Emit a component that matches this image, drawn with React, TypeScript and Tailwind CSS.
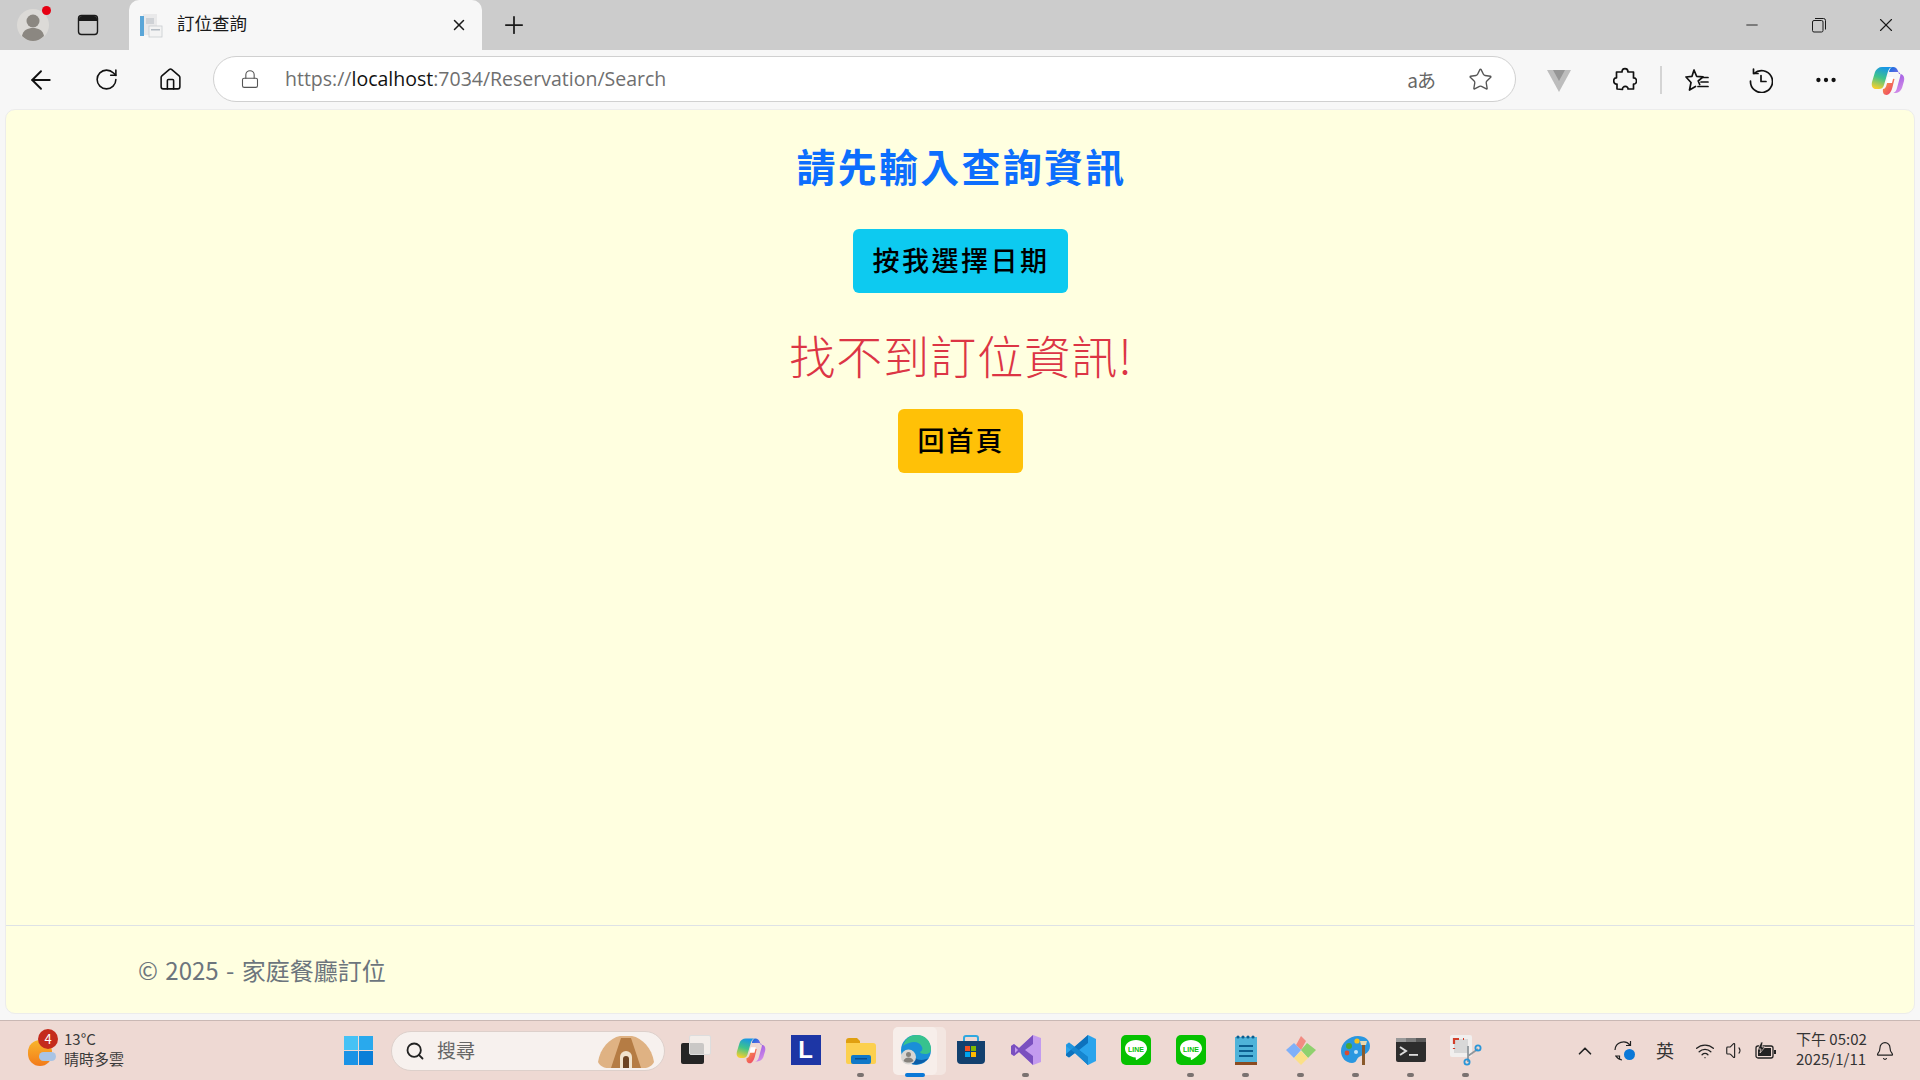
import { ArrowLeft, RotateCw, Home, Lock, Star, X, Plus, Minus, MoreHorizontal, ChevronUp, Bell, Search, Wifi, Volume1 } from 'lucide-react'

const CJK = "font-['Noto_Sans_CJK_TC','Noto_Sans',sans-serif]"

function ProfileAvatar() {
  return (
    <div className="relative w-[32px] h-[32px]">
      <svg width="32" height="32" viewBox="0 0 32 32">
        <circle cx="16" cy="16" r="16" fill="#dcdad7" />
        <circle cx="16" cy="12" r="6.5" fill="#8b8781" />
        <path d="M5 27c1-6 6-8 11-8s10 2 11 8c-3 3-7 5-11 5s-8-2-11-5z" fill="#8b8781" />
      </svg>
      <div className="absolute right-[-2px] top-[-3px] w-[9px] h-[9px] rounded-full bg-[#e60012]" />
    </div>
  )
}

function TabsIcon() {
  return (
    <svg width="22" height="22" viewBox="0 0 22 22" fill="none">
      <rect x="1.5" y="1.5" width="19" height="19" rx="3" stroke="#1a1a1a" strokeWidth="1.4" />
      <path d="M2 5a3 3 0 0 1 3-3h12a3 3 0 0 1 3 3v2H2z" fill="#1a1a1a" />
    </svg>
  )
}

function PageFavicon() {
  return (
    <svg width="24" height="26" viewBox="0 0 24 26">
      <rect x="4" y="2" width="14" height="21" fill="#e9e9ea" />
      <rect x="1" y="4" width="4" height="20" fill="#5aa6d8" />
      <rect x="7" y="6" width="8" height="6" fill="#cfd2d6" />
      <rect x="10" y="14" width="13" height="11" fill="#f3f3f3" stroke="#c8ccd0" strokeWidth="0.8" />
      <rect x="12" y="17" width="9" height="1.5" fill="#b4bcc4" />
    </svg>
  )
}

function TranslateIcon() {
  return <span className={`${CJK} text-[19px] leading-none text-[#666] tracking-[-1px]`}>aあ</span>
}

function VueIcon() {
  return (
    <svg width="24" height="24" viewBox="0 0 24 24">
      <path d="M0 2h24L12 24z" fill="#bdbdbd" />
      <path d="M6 2h12l-6 11z" fill="#969696" />
    </svg>
  )
}

function PuzzleIcon() {
  return (
    <svg width="24" height="26" viewBox="0 0 24 26" fill="none" stroke="#111" strokeWidth="1.7" strokeLinejoin="round">
      <path d="M9 5c0-4.500 6-4.500 6 0h5.500v6c4-.5 4 6.500 0 6v5H15c.5-3.500-6-3.500-5.500.5l-5.500-.5v-5c-4 1-4.500-6.500-.5-6V5z" />
    </svg>
  )
}

function FavoritesIcon() {
  return (
    <svg width="26" height="24" viewBox="0 0 26 24" fill="none" stroke="#111" strokeWidth="1.7" strokeLinejoin="round" strokeLinecap="round">
      <path d="M10 2l2.600 6.300 6.400.5-4.800 4.200 1.500 3.500M5.500 22l1.500-7.500L2 9l6-.7L10 2M5.500 22l6-3.500" />
      <path d="M18 9.500h6M17 14h7M14 18.500h10" />
    </svg>
  )
}

function HistoryIcon() {
  return (
    <svg width="24" height="26" viewBox="0 0 24 26" fill="none" stroke="#111" strokeWidth="1.7" strokeLinecap="round" strokeLinejoin="round">
      <path d="M5 6.500A11 11 0 1 1 1.500 14" />
      <path d="M9 6.500H4.500V2" />
      <path d="M12 8.500v6h5" />
    </svg>
  )
}

function CopilotIcon({ size = 34, id = 'a' }: { size?: number; id?: string }) {
  return (
    <svg width={size} height={size} viewBox="0 0 34 34">
      <defs>
        <linearGradient id={`cp1${id}`} x1="0.6" y1="0" x2="0.3" y2="1">
          <stop offset="0" stopColor="#1795e8" />
          <stop offset="0.5" stopColor="#3fc48a" />
          <stop offset="1" stopColor="#f6cf2d" />
        </linearGradient>
        <linearGradient id={`cp2${id}`} x1="0.3" y1="0" x2="0.7" y2="1">
          <stop offset="0" stopColor="#1f6fe0" />
          <stop offset="0.45" stopColor="#a864e4" />
          <stop offset="1" stopColor="#d58fe8" />
        </linearGradient>
        <linearGradient id={`cp3${id}`} x1="0" y1="0" x2="0.8" y2="1">
          <stop offset="0" stopColor="#f9a83a" />
          <stop offset="1" stopColor="#ee3f6b" />
        </linearGradient>
      </defs>
      <path d="M11 4h11c-3 0-4.500 2-5.500 6l-3.500 12c-1 3-2.500 4-5 4H5c-3 0-5-2.500-4-7l3-10c1-3 4-5 7-5z" fill={`url(#cp1${id})`} />
      <path d="M22 4c2.500 0 4 1.500 5 4l1 3h1c3 0 5 3 4 7l-2 7c-1 3-4 5-7 5h-3c3 0 4-1.500 5-5l3-11c1-3 0-5-3-5h-8c.5-3 2-5 4-5z" fill={`url(#cp2${id})`} />
      <path d="M12 26c2 0 3-2 3.500-4l2-7 6 1-2 8c-1 4-3 8-6 8-3 0-4-3-3.500-6z" fill={`url(#cp3${id})`} />
      <path d="M16.500 14h6l-1.500 6h-5.500z" fill="#ffffff" />
    </svg>
  )
}

function RestoreIcon() {
  return (
    <svg width="16" height="16" viewBox="0 0 16 16" fill="none" stroke="#1a1a1a" strokeWidth="1">
      <rect x="1.500" y="3.500" width="10.500" height="11.500" rx="1.500" />
      <path d="M4 1.500h8.500a2 2 0 0 1 2 2v9" />
    </svg>
  )
}

function TabBar() {
  return (
    <div className={`h-[50px] shrink-0 bg-[#cccccc] flex items-center ${CJK}`}>
      <div className="w-[66px] pl-[17px]"><ProfileAvatar /></div>
      <div className="w-[44px] flex justify-center"><TabsIcon /></div>
      <div className="ml-[19px] self-stretch w-[353px] bg-[#f7f7f7] rounded-t-[10px] flex items-center pl-[10px] pr-[14px]">
        <PageFavicon />
        <span className="ml-[14px] text-[17.500px] leading-[24px] mt-[-5px] text-[#1a1a1a]">訂位查詢</span>
        <X className="ml-auto" size={18} strokeWidth={2} color="#1a1a1a" />
      </div>
      <div className="ml-[18px]"><Plus size={28} strokeWidth={1.500} color="#1a1a1a" /></div>
      <div className="ml-auto mr-[1px] flex items-center">
        <div className="w-[67px] flex justify-center"><Minus size={18} strokeWidth={1.200} color="#1a1a1a" /></div>
        <div className="w-[67px] flex justify-center"><RestoreIcon /></div>
        <div className="w-[67px] flex justify-center"><X size={22} strokeWidth={1.200} color="#1a1a1a" /></div>
      </div>
    </div>
  )
}

function Toolbar() {
  return (
    <div className="h-[59px] shrink-0 bg-[#f7f7f7] flex items-center">
      <div className="w-[213px] flex items-center pl-[26px]">
        <ArrowLeft size={30} strokeWidth={1.500} color="#111" />
        <RotateCw className="ml-[38px]" size={25} strokeWidth={1.500} color="#111" />
        <Home className="ml-[39px]" size={25} strokeWidth={1.500} color="#111" />
      </div>
      <div className="w-[1303px] h-[46px] mt-[-1px] bg-white border border-[#d0d0d0] rounded-full flex items-center pl-[26px]">
        <Lock size={20} strokeWidth={1.300} color="#555" />
        <div className="ml-[25px] font-['Open_Sans',sans-serif] text-[19.500px] text-[#6f6f6f]">
          https://<span className="text-[#111]">localhost</span>:7034/Reservation/Search
        </div>
        <div className="ml-auto flex items-center">
          <TranslateIcon />
          <Star className="ml-[33px] mr-[22px]" size={25} strokeWidth={1.300} color="#555" />
        </div>
      </div>
      <div className="ml-[31px]"><VueIcon /></div>
      <div className="ml-[42px]"><PuzzleIcon /></div>
      <div className="ml-[23px] w-[2px] h-[28px] bg-[#d4d4d4]" />
      <div className="ml-[22px]"><FavoritesIcon /></div>
      <div className="ml-[39px]"><HistoryIcon /></div>
      <MoreHorizontal className="ml-[40px]" size={26} strokeWidth={2} color="#111" />
      <div className="ml-[32px]"><CopilotIcon /></div>
    </div>
  )
}

function Page() {
  return (
    <div className={`flex-1 mx-[5px] bg-[#ffffe0] border border-[#ececec] rounded-[10px] flex flex-col min-h-0 ${CJK}`}>
      <div className="flex-1 flex flex-col items-center pt-[32px]">
        <h1 className="text-[39px] leading-[47px] font-bold text-[#0d6efd] tracking-[2.250px] pl-[3px]">請先輸入查詢資訊</h1>
        <button className="mt-[40px] w-[215px] h-[64px] pb-[2px] pl-[2px] rounded-[6px] bg-[#0dcaf0] text-black text-[27px] font-medium tracking-[2.500px]">按我選擇日期</button>
        <div className="mt-[29px] pl-[2px] text-[46px] leading-[64px] font-light text-[#dc3545] tracking-[1px]">找不到訂位資訊!</div>
        <button className="mt-[23px] w-[125px] h-[64px] pb-[2px] pl-[2px] rounded-[6px] bg-[#ffc107] text-black text-[27px] font-medium tracking-[2px]">回首頁</button>
      </div>
      <footer className="h-[88px] shrink-0 border-t border-[#dee2e6] flex items-center pl-[132px] text-[24px] [word-spacing:2px] text-[#6c757d]">
        © 2025 - 家庭餐廳訂位
      </footer>
    </div>
  )
}

function WeatherIcon() {
  return (
    <div className="relative w-[30px] h-[34px]">
      <div className="absolute left-[0px] top-[6px] w-[24px] h-[26px] rounded-full bg-gradient-to-b from-[#f8b62b] to-[#f27a1a]" />
      <div className="absolute left-[11px] top-[18px] w-[17px] h-[9px] rounded-full bg-[#a9c4e4]" />
      <div className="absolute left-[10px] top-[-5px] w-[20px] h-[20px] rounded-full bg-[#c42b1c] flex items-center justify-center text-white text-[13px]">4</div>
    </div>
  )
}

function WinLogo() {
  return (
    <div className="grid grid-cols-2 gap-[1px] w-[29px] h-[29px]">
      <div className="bg-[#46c2f5]" />
      <div className="bg-[#29a9ed]" />
      <div className="bg-[#1a93e6]" />
      <div className="bg-[#0a7ed8]" />
    </div>
  )
}

function BirdArt() {
  return (
    <svg width="60" height="34" viewBox="0 0 60 34">
      <path d="M2 28C4 14 14 4 24 2h12c10 2 20 12 22 26-2 4-6 6-10 6H12c-4 0-8-2-10-6z" fill="#dfb283" />
      <path d="M15 34L25 4h10l10 30z" fill="#b57c44" />
      <path d="M24 34v-11a6 6 0 0 1 12 0v11z" fill="#f1e3cd" />
      <path d="M27 34v-9a3 3 0 0 1 6 0v9z" fill="#6d4423" />
    </svg>
  )
}

function TaskViewIcon() {
  return (
    <div className="relative w-[30px] h-[30px]">
      <div className="absolute left-0 top-[8px] w-[23px] h-[21px] rounded-[2px] bg-[#252525]" />
      <div className="absolute right-0 top-0 w-[22px] h-[20px] rounded-[2px] bg-[#f4f1ef]/80 border border-[#ddd]" />
    </div>
  )
}

function LTile() {
  return <div className="w-[30px] h-[30px] bg-[#1d36a5] text-white font-['Liberation_Sans',sans-serif] font-bold text-[24px] leading-[30px] text-center">L</div>
}

function FolderIcon() {
  return (
    <svg width="30" height="30" viewBox="0 0 30 30">
      <path d="M0 6a3 3 0 0 1 3-3h8l3 3v4H0z" fill="#e0a010" />
      <path d="M0 8h27a3 3 0 0 1 3 3v16a2 2 0 0 1-2 2H2a2 2 0 0 1-2-2z" fill="#fcd04f" />
      <rect x="5" y="20" width="20" height="9" rx="2" fill="#1078c8" />
      <rect x="9" y="23" width="12" height="1.500" fill="#0a4f90" />
    </svg>
  )
}

function EdgeIcon() {
  return (
    <svg width="30" height="30" viewBox="0 0 30 30">
      <circle cx="15" cy="15" r="15" fill="#1a8fd8" />
      <path d="M2 11C4 3 10 0 16 0c8 0 14 6 14 14 0 3-2 5-6 5-3 0-5-1-5-2 2-1 3-3 2-5-2-5-8-6-13-4-3 1-5 2-6 3z" fill="#37c28e" />
      <path d="M7 27c5 4 15 3 21-4-4 2-10 3-14 0z" fill="#0c5ea8" />
      <circle cx="7.500" cy="22" r="7.500" fill="#d9d6d3" />
      <circle cx="7.500" cy="19.500" r="2.500" fill="#85817c" />
      <path d="M2.500 26c1-3 3-3.500 5-3.500s4 .5 5 3.500c-3 2-7 2-10 0z" fill="#85817c" />
    </svg>
  )
}

function StoreIcon() {
  return (
    <svg width="30" height="30" viewBox="0 0 30 30">
      <path d="M8 7V3a2 2 0 0 1 2-2h10a2 2 0 0 1 2 2v4" fill="none" stroke="#2fa8e0" strokeWidth="2" />
      <path d="M1 6h28v19a4 4 0 0 1-4 4H5a4 4 0 0 1-4-4z" fill="#12406e" />
      <rect x="9" y="11" width="5" height="5" fill="#f25022" />
      <rect x="15" y="11" width="5" height="5" fill="#7fba00" />
      <rect x="9" y="17" width="5" height="5" fill="#00a4ef" />
      <rect x="15" y="17" width="5" height="5" fill="#ffb900" />
    </svg>
  )
}

function VisualStudioIcon() {
  return (
    <svg width="30" height="30" viewBox="0 0 30 30">
      <path d="M22 0l8 3v24l-8 3-14-13-5 4-3-2V11l3-2 5 4z" fill="#c39bef" />
      <path d="M22 0v9l-8 6 8 6v9L8 17l-5 4-3-2V11l3-2 5 4zM4 12v6l3-3z" fill="#7a50bf" fillRule="evenodd" />
    </svg>
  )
}

function VSCodeIcon() {
  return (
    <svg width="30" height="30" viewBox="0 0 30 30">
      <path d="M22 0l8 4v22l-8 4-13-12-6 4.500-3-2V9.500l3-2 6 4.500z" fill="#2aa4ec" />
      <path d="M22 0v8l-9 7 9 7v8L9 18l-6 4.500-3-2v-1.500L22 0z" fill="#0d72bd" />
      <path d="M0 11l3-3.500L22 22v8L9 18z" fill="#1b8fd8" opacity="0.700" />
    </svg>
  )
}

function LineIcon() {
  return (
    <svg width="30" height="30" viewBox="0 0 30 30">
      <rect width="30" height="30" rx="5" fill="#06c100" />
      <path d="M15 5c6.500 0 11 3.800 11 8.500 0 4.500-6 9-10.500 11.500-.8.300-.8-1-.7-2.500C8.500 22 4 18.500 4 13.500 4 8.800 8.500 5 15 5z" fill="#fff" />
      <text x="15" y="16.500" textAnchor="middle" fontFamily="Liberation Sans" fontWeight="700" fontSize="7" fill="#06c100">LINE</text>
    </svg>
  )
}

function NotepadIcon() {
  return (
    <svg width="24" height="30" viewBox="0 0 24 30">
      <rect x="1" y="2" width="22" height="26" fill="#4fb3d9" />
      <rect x="1" y="27" width="22" height="3" fill="#8a4b20" />
      <g fill="#0c5f90">
        <circle cx="4" cy="2" r="1.600" /><circle cx="9" cy="2" r="1.600" /><circle cx="14" cy="2" r="1.600" /><circle cx="19" cy="2" r="1.600" />
        <rect x="5" y="10" width="14" height="2" /><rect x="5" y="15" width="14" height="2" /><rect x="5" y="20" width="14" height="2" />
      </g>
    </svg>
  )
}

function GitToolIcon() {
  return (
    <svg width="30" height="30" viewBox="0 0 30 30">
      <path d="M15 1l5 5-5 9-5-5z" fill="#f28b82" />
      <path d="M21 8l9 7-8 8-7-8z" fill="#8fd16e" />
      <path d="M8 8l7 7-7 8-8-8z" fill="#7fb0f8" />
      <path d="M15 16l7 7-7 7-7-7z" fill="#fbe088" />
    </svg>
  )
}

function PaletteIcon() {
  return (
    <svg width="30" height="30" viewBox="0 0 30 30">
      <path d="M17 1c7 0 12 4 12 10 0 8-8 9-11 11-3 2-2 6-7 6C5 28 0 23 0 16 0 8 8 1 17 1z" fill="#2a97e0" />
      <circle cx="8" cy="11" r="3" fill="#4aa534" />
      <circle cx="16" cy="6" r="2.600" fill="#f6c21c" />
      <circle cx="6" cy="18" r="2.400" fill="#d94b32" />
      <circle cx="15" cy="17" r="2" fill="#bfe2f7" />
      <rect x="21" y="9" width="3" height="21" fill="#8a5a2b" />
      <path d="M19 6h7l-1 4h-5z" fill="#e8d8b0" />
    </svg>
  )
}

function TerminalIcon() {
  return (
    <svg width="30" height="24" viewBox="0 0 30 24">
      <rect width="30" height="24" rx="2" fill="#2d2d2d" />
      <rect width="10" height="4" fill="#9a9a9a" />
      <rect x="10" width="10" height="4" fill="#7c7c7c" />
      <rect x="20" width="10" height="4" fill="#5a5a5a" />
      <path d="M4 9l6 4-6 4" fill="none" stroke="#dcdcdc" strokeWidth="2" />
      <rect x="13" y="16" width="9" height="1.800" fill="#dcdcdc" />
    </svg>
  )
}

function SnipIcon() {
  return (
    <svg width="32" height="32" viewBox="0 0 32 32">
      <rect x="0" y="1" width="22" height="22" rx="2" fill="#f1efee" />
      <rect x="4" y="5" width="14" height="14" fill="#d8d8d8" />
      <path d="M4 10V5h5M13 5h1M4 14v1" fill="none" stroke="#d23f2a" strokeWidth="2.200" />
      <path d="M18 12v16M18 22l10-7" stroke="#8f979c" strokeWidth="1.800" fill="none" />
      <circle cx="28" cy="14" r="2.600" fill="none" stroke="#2a96d8" strokeWidth="1.800" />
      <circle cx="17" cy="28" r="2.600" fill="none" stroke="#2a96d8" strokeWidth="1.800" />
    </svg>
  )
}

function SyncIcon() {
  return (
    <svg width="22" height="24" viewBox="0 0 22 24">
      <g fill="none" stroke="#222" strokeWidth="1.200">
        <path d="M1 11a8.500 8.500 0 0 1 15-5" />
        <path d="M16.500 2v4.500H12" />
        <path d="M1 17h4.500v4M2 17a8 8 0 0 0 6 4" />
      </g>
      <circle cx="15.500" cy="15.500" r="5.500" fill="#0a78d7" />
    </svg>
  )
}

function BatteryIcon() {
  return (
    <svg width="22" height="18" viewBox="0 0 22 18">
      <rect x="1" y="4" width="17" height="12" rx="2" fill="none" stroke="#222" strokeWidth="1.300" />
      <rect x="3" y="6" width="13" height="8" fill="#222" />
      <rect x="19" y="8" width="2" height="4" fill="#222" />
      <path d="M6 0L3 7h3l-1 4 5-6H7l1-5z" fill="#222" stroke="#f0dcd6" strokeWidth="0.700" />
    </svg>
  )
}

const dock = [
  { key: 'task', icon: <TaskViewIcon />, running: false },
  { key: 'copilot', icon: <CopilotIcon size={30} id="b" />, running: false },
  { key: 'l', icon: <LTile />, running: false },
  { key: 'folder', icon: <FolderIcon />, running: true },
  { key: 'edge', icon: <EdgeIcon />, running: false, active: true },
  { key: 'store', icon: <StoreIcon />, running: false },
  { key: 'vs', icon: <VisualStudioIcon />, running: true },
  { key: 'code', icon: <VSCodeIcon />, running: false },
  { key: 'line1', icon: <LineIcon />, running: false },
  { key: 'line2', icon: <LineIcon />, running: true },
  { key: 'note', icon: <NotepadIcon />, running: true },
  { key: 'git', icon: <GitToolIcon />, running: true },
  { key: 'paint', icon: <PaletteIcon />, running: true },
  { key: 'term', icon: <TerminalIcon />, running: true },
  { key: 'snip', icon: <SnipIcon />, running: true },
]

function Taskbar() {
  return (
    <div className={`h-[60px] mt-[6px] shrink-0 bg-[#eed9d3] border-t border-[#c9b8b4] flex items-center ${CJK}`}>
      <div className="w-[344px] pl-[28px] flex items-center">
        <WeatherIcon />
        <div className="ml-[6px] mt-[-3px] text-[15px] leading-[20px] text-[#3a3a3a]">
          <div>13°C</div>
          <div>晴時多雲</div>
        </div>
      </div>
      <WinLogo />
      <div className="ml-[18px] w-[274px] h-[40px] rounded-full bg-[#f7f1ee] border border-[#ddd0cb] flex items-center pl-[13px] pr-[8px]">
        <Search size={20} strokeWidth={2.200} color="#222" />
        <span className="ml-[12px] mt-[-2px] text-[19px] leading-[24px] text-[#666]">搜尋</span>
        <div className="ml-auto"><BirdArt /></div>
      </div>
      <div className="ml-[3px] flex">
        {dock.map((d) => (
          <div key={d.key} className="relative w-[55px] h-[52px] flex items-center justify-center">
            {d.active && <div className="absolute left-[12px] top-[2px] w-[46px] h-[48px] rounded-[5px] bg-[#f3e6e1]" />}
            {d.active && <div className="absolute left-[5px] top-[2px] w-[44px] h-[48px] rounded-[5px] bg-[#f7eeea]" />}
            <div className="relative flex mt-[-2px]">{d.icon}</div>
            {d.running && <div className="absolute bottom-[0px] left-[24px] w-[7px] h-[4px] rounded-full bg-[#7a7270]" />}
            {d.active && <div className="absolute bottom-[0px] left-[17px] w-[20px] h-[4px] rounded-full bg-[#0a78d7]" />}
          </div>
        ))}
      </div>
      <div className="ml-[81px] flex items-center">
        <ChevronUp size={22} strokeWidth={1.800} color="#222" />
        <div className="ml-[18px]"><SyncIcon /></div>
        <span className="ml-[20px] text-[18px] text-[#333]">英</span>
        <Wifi className="ml-[21px]" size={20} strokeWidth={1.600} color="#222" />
        <Volume1 className="ml-[10px]" size={21} strokeWidth={1.300} color="#222" />
        <div className="ml-[9px]"><BatteryIcon /></div>
        <div className="ml-[19px] mt-[-3px] w-[72px] text-[15px] leading-[20px] text-[#333] text-left whitespace-nowrap">
          <div>下午 05:02</div>
          <div>2025/1/11</div>
        </div>
        <Bell className="ml-[7px]" size={20} strokeWidth={1.400} color="#222" />
      </div>
    </div>
  )
}

export default function App() {
  return (
    <div className="w-[1920px] h-[1080px] overflow-hidden bg-[#f7f7f7] flex flex-col">
      <TabBar />
      <Toolbar />
      <Page />
      <Taskbar />
    </div>
  )
}
